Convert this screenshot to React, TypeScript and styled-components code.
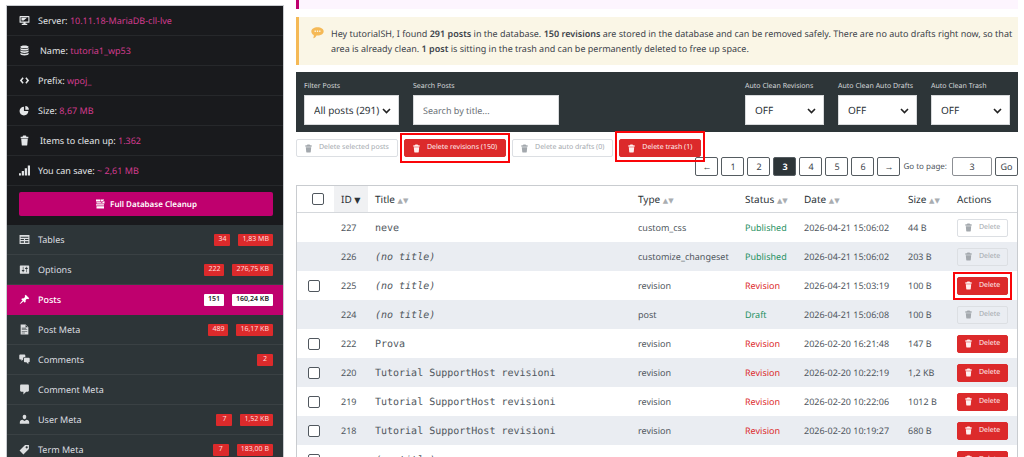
import React from "react";
import styled, { createGlobalStyle, css } from "styled-components";

const sans = `"Noto Sans", "Open Sans", sans-serif`;
const mono = `"DejaVu Sans Mono", "Liberation Mono", monospace`;

const c = {
  ink: "#50575e",
  dark: "#2d3538",
  black: "#191a1d",
  pink: "#bf006e",
  red: "#dc2a2b",
  line: "#c9ccd0",
  stripe: "#eaedf2",
  green: "#1f9163",
};

const Global = createGlobalStyle`
  *, *::before, *::after { box-sizing: border-box; }
  html, body { margin: 0; background: #fff; }
  body { font-family: ${sans}; font-size: 9px; line-height: 15px; color: ${c.ink}; overflow: hidden; text-rendering: geometricPrecision; }
  button, input, select { font-family: inherit; margin: 0; text-rendering: inherit; }
`;

/* ---------- icons ---------- */

const paths = {
  trash:
    "M8 1h4c.8 0 1.300.6 1.300 1.300V3H17v3H3V3h3.700v-.7C6.700 1.600 7.200 1 8 1zM4 7h12l-1 11c0 .6-.5 1-1 1H6c-.6 0-1-.4-1-1z",
  server:
    "M2 2h16c.6 0 1 .4 1 1v10c0 .6-.4 1-1 1h-6v2h3v2H5v-2h3v-2H2c-.6 0-1-.4-1-1V3c0-.6.4-1 1-1zM3 4v8h14V4H3zM4.500 5h10l-6 5h-4z",
  database:
    "M10 1c4.400 0 7.500 1 7.500 2.500S14.400 6 10 6 2.500 5 2.500 3.500 5.600 1 10 1zM2.500 5.500C4 6.700 6.500 7.200 10 7.200s6-.5 7.500-1.700v2.300c0 1.400-3.100 2.400-7.500 2.400s-7.500-1-7.500-2.400zM2.500 9.700c1.500 1.200 4 1.700 7.500 1.700s6-.5 7.500-1.700V12c0 1.400-3.100 2.400-7.500 2.400S2.500 13.400 2.500 12zM2.500 14c1.500 1.200 4 1.700 7.500 1.700s6-.5 7.500-1.700v2.500C17.500 18 14.400 19 10 19s-7.500-1-7.500-2.500z",
  code: "M8.500 6L6.500 4 1.500 10l5 6 2-2-3.200-4zM11.500 6l2-2 5 6-5 6-2-2 3.200-4z",
  pie: "M11.500 8.500V2c4 0 6.500 3 6.500 6.500zM9 3v8h8c0 4.500-3.500 8-8 8s-8-3.500-8-8 3.500-8 8-8z",
  bars: "M20 19V1h-4v18zM14.500 19V6h-4v13zM9 19v-8H5v8zM3.500 19v-4H0v4z",
  cleanup:
    "M2 1h9v4H2zM12 1h6v1l-3 3h-3zM3 6.500h9l1.500 1.500L18 4l1 1v4H3zM2 10.500h16V13H2zM3 14.500h15V19H3z",
  table:
    "M19 18V2H1v16h18zM17 7H3V5h14v2zM9 11H3V9h6v2zm8 0h-6V9h6v2zm-8 5H3v-3h6v3zm8 0h-6v-3h6v3z",
  options:
    "M18.500 16.500v-13c0-.55-.45-1-1-1h-15c-.55 0-1 .45-1 1v13c0 .55.45 1 1 1h15c.55 0 1-.45 1-1zM8 11h1c.55 0 1 .45 1 1s-.45 1-1 1H8v1.500c0 .28-.22.5-.5.5s-.5-.22-.5-.5V13H6c-.55 0-1-.45-1-1s.45-1 1-1h1V5.500c0-.28.22-.5.5-.5s.5.22.5.5V11zm5-2h-1c-.55 0-1-.45-1-1s.45-1 1-1h1V5.500c0-.28.22-.5.5-.5s.5.22.5.5V7h1c.55 0 1 .45 1 1s-.45 1-1 1h-1v5.500c0 .28-.22.5-.5.5s-.5-.22-.5-.5V9z",
  pin: "M10.440 3.020l1.820-1.820 6.360 6.350-1.830 1.820c-1.050-.68-2.480-.57-3.410.36l-.75.75c-.92.93-1.040 2.350-.35 3.410l-1.830 1.820-2.410-2.410-2.800 2.790c-.42.42-3.380 2.710-3.800 2.290s1.860-3.390 2.280-3.810l2.790-2.790L4.100 9.360l1.830-1.820c1.050.69 2.480.57 3.400-.36l.75-.75c.93-.92 1.050-2.350.36-3.410z",
  page: "M3 1h9l5 5v13H3zM12 2v4h4zM5 7v1h8V7zM5 10v1h10v-1zM5 13v1h10v-1zM5 16v1h6v-1z",
  comments:
    "M2 1h8c.8 0 1.500.7 1.500 1.500V6H9C8 6 7.500 6.700 7.500 7.500V10L4.500 12.500V10H2C1.200 10 .5 9.300.5 8.500v-6C.5 1.700 1.200 1 2 1zM10.500 7h7.500c.8 0 1.500.7 1.500 1.500v5c0 .8-.7 1.500-1.500 1.500h-1v3.500L13.500 15h-3C9.700 15 9 14.300 9 13.500v-5C9 7.700 9.700 7 10.500 7z",
  comment:
    "M4 1h12c1.100 0 2 .9 2 2v9c0 1.100-.9 2-2 2h-3l-5 5v-5H4c-1.100 0-2-.9-2-2V3c0-1.100.9-2 2-2z",
  user: "M10 9.500c-2.600 0-3.200-3.500-3.200-3.700C6.500 4 7.500 1.500 10 1.500S13.500 4 13.200 5.800c0 .2-.6 3.700-3.200 3.700zM1.500 17.500V15c0-2.500 2-4.500 5-4.500l3.500 2 3.500-2c3 0 5 2 5 4.500v2.500z",
  tag: "M11 2h7v7L8 19l-7-7zm3 6c1.100 0 2-.9 2-2s-.9-2-2-2-2 .9-2 2 .9 2 2 2z",
  notice:
    "M10 2c5.500 0 9.500 2.700 9.500 6.300S15.500 14.500 10 14.500H8.500C7.500 17 5.500 18.500 3 19c1.200-1.500 1.500-3 1.200-5.200C1.900 12.700.5 10.700.5 8.300.5 4.700 4.500 2 10 2zM5.500 7v2.200h2V7zM9 7v2.200h2V7zM12.500 7v2.200h2V7z",
};

type IconName = keyof typeof paths;

const Svg = styled.svg<{ $size: number }>`
  width: ${(p) => p.$size}px;
  height: ${(p) => p.$size}px;
  flex: none;
  display: block;
  fill: currentColor;
`;

const Icon = ({ name, size = 11 }: { name: IconName; size?: number }) => (
  <Svg $size={size} viewBox="0 0 20 20" aria-hidden="true">
    <path fillRule="evenodd" d={paths[name]} />
  </Svg>
);

/* ---------- page ---------- */

const Page = styled.div`
  display: flex;
  align-items: flex-start;
  gap: 12px;
  height: 100vh;
  padding: 0 6px;
  overflow: hidden;
`;

const Sidebar = styled.aside`
  flex: none;
  width: 278px;
  margin-top: 5px;
  border: 1px solid ${c.line};
  background: ${c.black};
  color: #e4e6e8;
`;

const InfoRow = styled.div<{ $wide?: boolean }>`
  display: flex;
  align-items: center;
  gap: ${(p) => (p.$wide ? 10 : 8)}px;
  height: 30px;
  padding: 0 12px;
  border-bottom: 1px solid #26282b;
  white-space: pre;
`;

const InfoValue = styled.span`
  color: #d23a8e;
`;

const CleanupArea = styled.div`
  padding: 6px 10px 9px 12px;
`;

const CleanupButton = styled.button`
  display: flex;
  align-items: center;
  justify-content: center;
  gap: 5px;
  width: 100%;
  height: 24px;
  border: 0;
  border-radius: 2px;
  background: ${c.pink};
  color: #fff;
  font-size: 8px;
  font-weight: 600;
`;

const NavLink = styled.a<{ $active?: boolean }>`
  display: flex;
  align-items: center;
  gap: 8px;
  height: 30px;
  padding: 0 10px 0 12px;
  border-bottom: 1px solid ${(p) => (p.$active ? c.pink : "#3a4144")};
  background: ${(p) => (p.$active ? c.pink : c.dark)};
  color: ${(p) => (p.$active ? "#fff" : "#dcdee0")};
  font-weight: ${(p) => (p.$active ? 500 : 400)};
  text-decoration: none;
`;

const NavLabel = styled.span`
  flex: 1;
`;

const Badge = styled.span<{ $active?: boolean }>`
  min-width: 16px;
  height: 12px;
  padding: 0 4px;
  border-radius: 1px;
  background: ${(p) => (p.$active ? "#fff" : c.red)};
  color: ${(p) => (p.$active ? "#222" : "#ffdcdc")};
  font-size: 7px;
  line-height: 12px;
  font-weight: ${(p) => (p.$active ? 600 : 400)};
  text-align: center;
`;

const Main = styled.main`
  flex: 1;
  min-width: 0;
`;

const Banner = styled.div`
  height: 9px;
  border-left: 3px solid ${c.pink};
  background: #fdf5fe;
`;

const Notice = styled.div`
  display: flex;
  gap: 7px;
  margin: 8px 0 7px;
  padding: 9px 4px 9px 12px;
  border-left: 3px solid #f5b956;
  background: #faf6e6;
  color: #3c434a;
  svg { color: #f5b956; }
`;

const NoticeText = styled.p`
  margin: 0;
  b { font-weight: 600; }
`;

const Toolbar = styled.div`
  display: flex;
  gap: 14px;
  padding: 7px 8px;
  background: ${c.dark};
`;

const Field = styled.label<{ $width: number; $push?: boolean }>`
  display: block;
  width: ${(p) => p.$width}px;
  margin-left: ${(p) => (p.$push ? "auto" : 0)};
  color: #d5d8da;
  font-size: 7px;
  white-space: nowrap;
`;

const control = css`
  display: block;
  width: 100%;
  height: 30px;
  margin-top: 1px;
  padding: 0 9px;
  border: 1px solid #d8dadc;
  border-radius: 0;
  background-color: #fff;
  color: #2c3338;
`;

const SelectBox = styled.span`
  display: grid;
  align-items: center;
  > * { grid-area: 1 / 1; }
  > svg { justify-self: end; margin: 2px 8px 0 0; color: #222; pointer-events: none; }
`;

const Select = styled.select`
  ${control}
  appearance: none;
  font-size: 10px;
`;

const Search = styled.input`
  ${control}
  font-size: 9px;
  &::placeholder { color: #6b7177; }
`;

const Button = styled.button`
  position: relative;
  display: inline-flex;
  align-items: center;
  gap: 6px;
  height: 18px;
  padding: 0 7px 0 6px;
  border: 1px solid ${c.red};
  border-radius: 2px;
  background: ${c.red};
  color: #fff0f0;
  font-size: 7px;
  line-height: 12px;
  white-space: nowrap;
  &:disabled {
    border-color: #dcdfe3;
    background: transparent;
    color: #a3a8ad;
  }
`;

const Actions = styled.div`
  display: flex;
  gap: 6px;
  margin-top: 7px;
  ${Button} { padding: 0 8px 0 7px; }
`;

const Mark = styled.span<{ $top: number; $side: number; $bottom: number }>`
  position: absolute;
  top: -${(p) => p.$top}px;
  right: -${(p) => p.$side}px;
  bottom: -${(p) => p.$bottom}px;
  left: -${(p) => p.$side}px;
  border: 2px solid #fa0509;
  z-index: 2;
  pointer-events: none;
`;

const Pager = styled.nav`
  display: flex;
  justify-content: flex-end;
  align-items: center;
  gap: 3px;
  margin-bottom: 9px;
`;

const PageButton = styled.button<{ $current?: boolean }>`
  width: 23px;
  height: 19px;
  padding: 0;
  border: 1px solid #555c61;
  border-radius: 2px;
  background: ${(p) => (p.$current ? c.dark : "#fff")};
  color: ${(p) => (p.$current ? "#fff" : "#3c434a")};
  font-size: 9px;
  font-weight: ${(p) => (p.$current ? 700 : 400)};
`;

const GoTo = styled.label`
  display: flex;
  align-items: center;
  gap: 5px;
  font-size: 8px;
`;

const PageInput = styled.input`
  width: 40px;
  height: 19px;
  border: 1px solid #8c8f94;
  border-radius: 2px;
  color: #3c434a;
  font-size: 9px;
  text-align: center;
`;

const Table = styled.table`
  width: 100%;
  table-layout: fixed;
  border-collapse: separate;
  border-spacing: 0;
  border: 1px solid ${c.line};
`;

const Col = styled.col<{ $w?: number }>`
  width: ${(p) => (p.$w ? `${p.$w}px` : "auto")};
`;

const Th = styled.th<{ $sorted?: boolean; $check?: boolean }>`
  height: 27px;
  padding: 0 0 0 ${(p) => (p.$check ? 15 : 7)}px;
  border-bottom: 1px solid #d5d8dc;
  background: ${(p) => (p.$sorted ? "#f0f1f3" : "#fff")};
  color: #2c3338;
  font-size: 10px;
  font-weight: 400;
  text-align: left;
  white-space: nowrap;
`;

const SortMark = styled.span<{ $on?: boolean }>`
  color: ${(p) => (p.$on ? "#2c3338" : "#a9adb1")};
  font-family: "DejaVu Sans", sans-serif;
  font-size: ${(p) => (p.$on ? 8 : 7)}px;
  line-height: 1;
`;

const Tr = styled.tr`
  &:nth-child(even) { background: ${c.stripe}; }
`;

const Td = styled.td<{ $check?: boolean }>`
  height: 29px;
  padding: 0 0 0 ${(p) => (p.$check ? 11 : 7)}px;
  white-space: nowrap;
`;

const Title = styled.span`
  font-family: ${mono};
  font-size: 10px;
`;

const Status = styled.span<{ $rev: boolean }>`
  color: ${(p) => (p.$rev ? c.red : c.green)};
`;

const Check = styled.input`
  appearance: none;
  display: block;
  width: 12px;
  height: 12px;
  margin: 0;
  border: 1px solid #50575e;
  border-radius: 2px;
  background: #fff;
`;

/* ---------- data ---------- */

const info: { icon: IconName; label: string; value: string; wide?: boolean }[] = [
  { icon: "server", label: "Server", value: "10.11.18-MariaDB-cll-lve" },
  { icon: "database", label: "Name", value: "tutoria1_wp53", wide: true },
  { icon: "code", label: "Prefix", value: "wpoj_" },
  { icon: "pie", label: "Size", value: "8,67 MB" },
  { icon: "trash", label: "Items to clean up", value: "1.362", wide: true },
  { icon: "bars", label: "You can save", value: "~ 2,61 MB" },
];

const nav: { icon: IconName; label: string; badges: string[]; active?: boolean }[] = [
  { icon: "table", label: "Tables", badges: ["34", "1,83 MB"] },
  { icon: "options", label: "Options", badges: ["222", "276,75 KB"] },
  { icon: "pin", label: "Posts", badges: ["151", "160,24 KB"], active: true },
  { icon: "page", label: "Post Meta", badges: ["489", "16,17 KB"] },
  { icon: "comments", label: "Comments", badges: ["2"] },
  { icon: "comment", label: "Comment Meta", badges: [] },
  { icon: "user", label: "User Meta", badges: ["7", "1,52 KB"] },
  { icon: "tag", label: "Term Meta", badges: ["7", "183,00 B"] },
];

const rows = [
  [227, "neve", "custom_css", "Published", "2026-04-21 15:06:02", "44 B"],
  [226, "", "customize_changeset", "Published", "2026-04-21 15:06:02", "203 B"],
  [225, "", "revision", "Revision", "2026-04-21 15:03:19", "100 B"],
  [224, "", "post", "Draft", "2026-04-21 15:06:08", "100 B"],
  [222, "Prova", "revision", "Revision", "2026-02-20 16:21:48", "147 B"],
  [220, "Tutorial SupportHost revisioni", "revision", "Revision", "2026-02-20 10:22:19", "1,2 KB"],
  [219, "Tutorial SupportHost revisioni", "revision", "Revision", "2026-02-20 10:22:06", "1012 B"],
  [218, "Tutorial SupportHost revisioni", "revision", "Revision", "2026-02-20 10:19:27", "680 B"],
  [217, "", "", "Revision", "", ""],
] as const;

const Chevron = () => (
  <svg width="9" height="6" viewBox="0 0 9 6" aria-hidden="true">
    <path d="M1 1l3.500 3.500L8 1" fill="none" stroke="currentColor" strokeWidth="1.600" />
  </svg>
);

const SelectField = ({ label, value, width, push }: { label: string; value: string; width: number; push?: boolean }) => (
  <Field $width={width} $push={push}>
    {label}
    <SelectBox>
      <Select defaultValue={value}>
        <option>{value}</option>
      </Select>
      <Chevron />
    </SelectBox>
  </Field>
);

export default function App() {
  return (
    <Page>
      <Global />
      <Sidebar>
        {info.map((i) => (
          <InfoRow key={i.label} $wide={i.wide}>
            <Icon name={i.icon} />
            <span>
              {i.label}: <InfoValue>{i.value}</InfoValue>
            </span>
          </InfoRow>
        ))}
        <CleanupArea>
          <CleanupButton>
            <Icon name="cleanup" size={10} />
            Full Database Cleanup
          </CleanupButton>
        </CleanupArea>
        <nav>
          {nav.map((n) => (
            <NavLink key={n.label} href="#" $active={n.active}>
              <Icon name={n.icon} />
              <NavLabel>{n.label}</NavLabel>
              {n.badges.map((b) => (
                <Badge key={b} $active={n.active}>{b}</Badge>
              ))}
            </NavLink>
          ))}
        </nav>
      </Sidebar>
      <Main>
        <Banner />
        <Notice>
          <Icon name="notice" size={13} />
          <NoticeText>
            Hey tutorialSH, I found <b>291 posts</b> in the database. <b>150 revisions</b> are stored in the database
            and can be removed safely. There are no auto drafts right now, so that area is already clean.{" "}
            <b>1 post</b> is sitting in the trash and can be permanently deleted to free up space.
          </NoticeText>
        </Notice>
        <Toolbar>
          <SelectField label="Filter Posts" value="All posts (291)" width={95} />
          <Field $width={146}>
            Search Posts
            <Search placeholder="Search by title..." />
          </Field>
          <SelectField label="Auto Clean Revisions" value="OFF" width={79} push />
          <SelectField label="Auto Clean Auto Drafts" value="OFF" width={79} />
          <SelectField label="Auto Clean Trash" value="OFF" width={79} />
        </Toolbar>
        <Actions>
          <Button disabled><Icon name="trash" size={9} />Delete selected posts</Button>
          <Button><Icon name="trash" size={9} />Delete revisions (150)<Mark $top={7} $side={5} $bottom={7} /></Button>
          <Button disabled><Icon name="trash" size={9} />Delete auto drafts (0)</Button>
          <Button><Icon name="trash" size={9} />Delete trash (1)<Mark $top={9} $side={5} $bottom={6} /></Button>
        </Actions>
        <Pager>
          {["←", "1", "2", "3", "4", "5", "6", "→"].map((p) => (
            <PageButton key={p} $current={p === "3"}>{p}</PageButton>
          ))}
          <GoTo>
            Go to page:
            <PageInput defaultValue="3" />
          </GoTo>
          <PageButton>Go</PageButton>
        </Pager>
        <Table>
          <colgroup>
            <Col $w={37} />
            <Col $w={34} />
            <Col />
            <Col $w={107} />
            <Col $w={59} />
            <Col $w={104} />
            <Col $w={49} />
            <Col $w={67} />
          </colgroup>
          <thead>
            <tr>
              <Th $check><Check type="checkbox" aria-label="Select all" /></Th>
              <Th $sorted>ID <SortMark $on>▼</SortMark></Th>
              {["Title", "Type", "Status", "Date", "Size"].map((h) => (
                <Th key={h}>{h} <SortMark>▲▼</SortMark></Th>
              ))}
              <Th>Actions</Th>
            </tr>
          </thead>
          <tbody>
            {rows.map(([id, title, type, status, date, size]) => {
              const rev = status === "Revision";
              return (
                <Tr key={id}>
                  <Td $check>{rev && <Check type="checkbox" aria-label={`Select ${id}`} />}</Td>
                  <Td>{date && id}</Td>
                  <Td><Title>{title || <i>(no title)</i>}</Title></Td>
                  <Td>{type}</Td>
                  <Td>{date && <Status $rev={rev}>{status}</Status>}</Td>
                  <Td>{date}</Td>
                  <Td>{size}</Td>
                  <Td>
                    <Button disabled={!rev}>
                      <Icon name="trash" size={9} />Delete
                      {id === 225 && <Mark $top={6} $side={5} $bottom={6} />}
                    </Button>
                  </Td>
                </Tr>
              );
            })}
          </tbody>
        </Table>
      </Main>
    </Page>
  );
}
